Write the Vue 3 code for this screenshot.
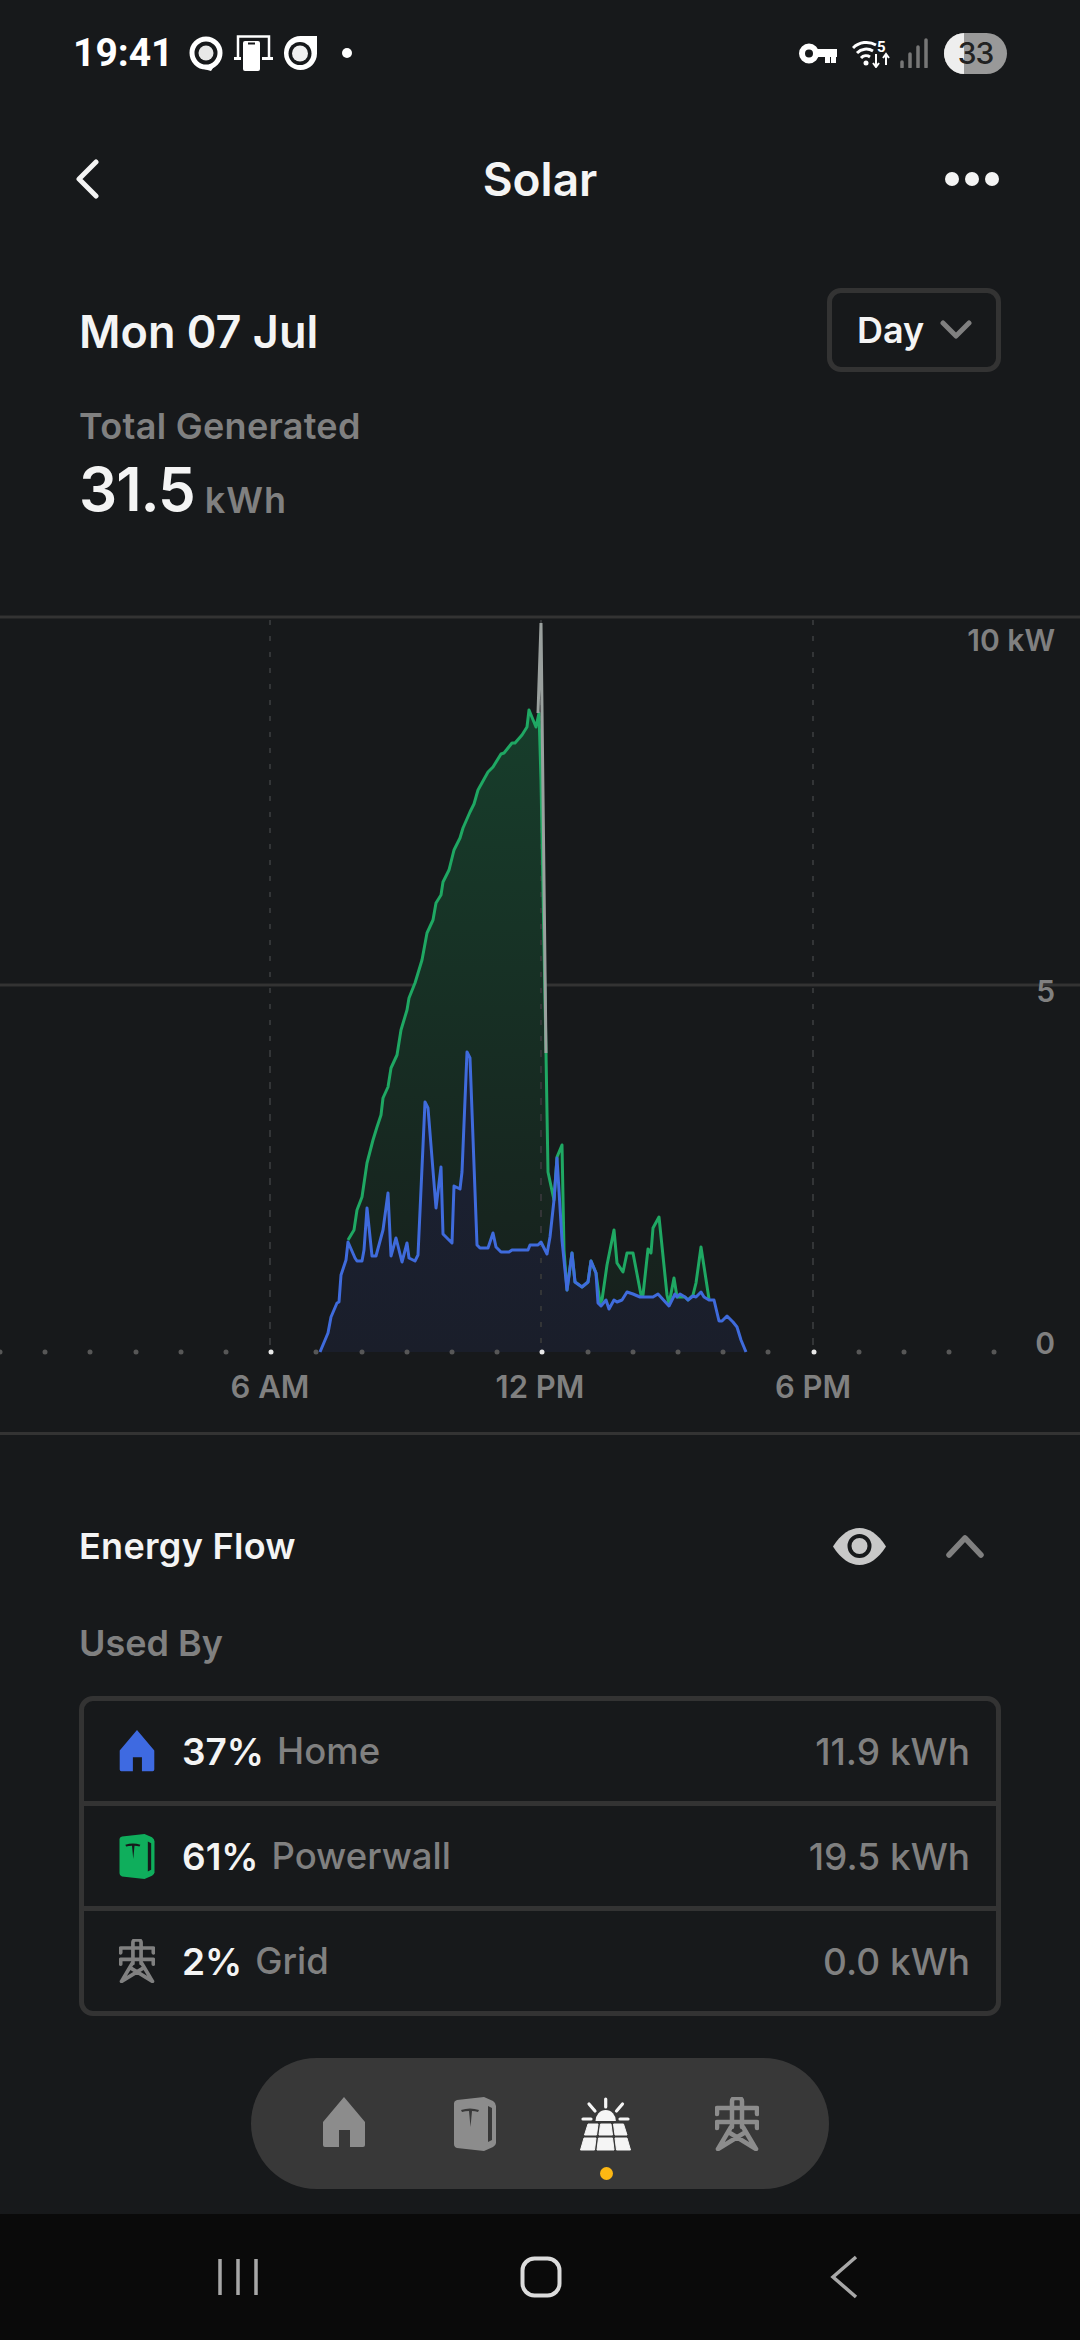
<template>
  <div class="screen">
    <!-- Status bar -->
    <div class="status">
      <span class="clock">19:41</span>
      <svg class="st-icon" width="34" height="35" viewBox="0 0 34 35">
        <circle cx="17" cy="17" r="14" fill="none" stroke="#fff" stroke-width="5" />
        <circle cx="17" cy="17" r="7.5" fill="#e8e8e8" />
        <path d="M30 23 L22 35 L15 33 L24 27 Z" fill="#fff" />
      </svg>
      <svg class="st-icon st-phone" width="40" height="36" viewBox="0 0 40 36">
        <path d="M4 22V1.5h31V22" fill="none" stroke="#fff" stroke-width="2.5" />
        <path d="M0 23.5h8M27 23.5h12" stroke="#fff" stroke-width="3" />
        <rect x="7" y="4" width="21" height="32" fill="#17191b" />
        <rect x="9" y="6" width="17" height="30" rx="2" fill="#fff" />
        <rect x="14" y="7.5" width="7" height="2" fill="#17191b" />
      </svg>
      <svg class="st-icon" width="33" height="34" viewBox="0 0 33 34">
        <path d="M16.5 0H33v17.5a16.5 16.5 0 1 1-33 0V16.5A16.5 16.5 0 0 1 16.5 0z" fill="#fff" />
        <circle cx="16" cy="17.5" r="11.5" fill="#17191b" />
        <circle cx="16" cy="17.5" r="8" fill="#f0f0f0" />
      </svg>
      <span class="st-dot"></span>
      <span class="spacer"></span>
      <svg class="st-key" width="38" height="21" viewBox="0 0 38 21">
        <circle cx="10" cy="10.5" r="7" fill="none" stroke="#fff" stroke-width="6" />
        <path d="M18 6h20v8h-1v6h-5v-6h-1v6h-5v-6h-8z" fill="#fff" />
      </svg>
      <svg class="st-wifi" width="38" height="30" viewBox="0 0 38 30">
        <path d="M1 10a19 19 0 0 1 23-3M5 15a13 13 0 0 1 16-2M9 20a7 7 0 0 1 9-1" fill="none" stroke="#fff" stroke-width="3" />
        <circle cx="14" cy="25" r="2.5" fill="#fff" />
        <text x="25" y="14" class="wifi-five">5</text>
        <path d="M24 16v13M21 25l3 4 3-4M34 27V16M31 20l3-4 3 4" fill="none" stroke="#fff" stroke-width="2" />
      </svg>
      <svg class="st-signal" width="30" height="30" viewBox="0 0 30 30">
        <path d="M3 24v5M11 16v13M19 9v20M27 2v27" stroke="#777" stroke-width="3.5" stroke-linecap="round" fill="none" />
      </svg>
      <div class="battery"><span class="battery-level"></span><span class="battery-text">33</span></div>
    </div>

    <!-- Title bar -->
    <div class="titlebar">
      <svg width="26" height="40" viewBox="0 0 26 40">
        <path d="M22 3 L5 20 L22 37" fill="none" stroke="#f4f4f4" stroke-width="5" stroke-linecap="round" stroke-linejoin="round" />
      </svg>
      <h1 class="title">Solar</h1>
      <div class="more"><span></span><span></span><span></span></div>
    </div>

    <!-- Date and total -->
    <div class="daterow">
      <span class="date">Mon 07 Jul</span>
      <div class="select">
        <span>Day</span>
        <svg width="32" height="20" viewBox="0 0 32 20">
          <path d="M3 3 L16 16 L29 3" fill="none" stroke="#808080" stroke-width="5" stroke-linecap="round" stroke-linejoin="round" />
        </svg>
      </div>
    </div>
    <div class="muted total-label">Total Generated</div>
    <div class="total"><span class="total-num">31.5</span><span class="muted total-unit">kWh</span></div>

    <!-- Chart -->
    <svg class="chart" width="1080" height="832" viewBox="0 600 1080 832">
      <defs>
        <linearGradient id="greenFill" gradientUnits="userSpaceOnUse" x1="0" y1="720" x2="0" y2="1300">
          <stop offset="0" stop-color="#173d2b" />
          <stop offset="1" stop-color="#17211d" />
        </linearGradient>
        <linearGradient id="blueFill" gradientUnits="userSpaceOnUse" x1="0" y1="1050" x2="0" y2="1352">
          <stop offset="0" stop-color="#1b2236" />
          <stop offset="1" stop-color="#1a1e2a" />
        </linearGradient>
      </defs>
      <line x1="0" x2="1080" y1="617" y2="617" class="grid-line" />
      <line x1="0" x2="1080" y1="985" y2="985" class="grid-line" />
      <polygon :points="greenArea" fill="url(#greenFill)" />
      <line v-for="x in [270, 541, 813]" :key="x" :x1="x" :x2="x" y1="620" y2="1350" class="dash" />
      <polygon :points="blueArea" fill="url(#blueFill)" />
      <line v-for="x in [270, 541, 813]" :key="'b' + x" :x1="x" :x2="x" y1="1050" y2="1350" class="dash" />
      <polyline :points="greenLine" fill="none" stroke="#1fa863" stroke-width="3" stroke-linejoin="round" />
      <polyline :points="spike" fill="none" stroke="#9aa09e" stroke-width="3" />
      <polyline :points="blueLine" fill="none" stroke="#3f6bdc" stroke-width="3" stroke-linejoin="round" />
      <circle v-for="d in dots" :key="d.x" :cx="d.x" cy="1352" r="2.5" :fill="d.major ? '#e8e8e8' : '#575757'" />
      <text x="1055" y="651" text-anchor="end" class="axis-y">10 kW</text>
      <text x="1055" y="1002" text-anchor="end" class="axis-y">5</text>
      <text x="1055" y="1354" text-anchor="end" class="axis-y">0</text>
      <text x="270" y="1398" text-anchor="middle" class="axis-x">6 AM</text>
      <text x="540" y="1398" text-anchor="middle" class="axis-x">12 PM</text>
      <text x="813" y="1398" text-anchor="middle" class="axis-x">6 PM</text>
    </svg>
    <div class="divider"></div>

    <!-- Energy flow -->
    <div class="flow-head">
      <span class="flow-title">Energy Flow</span>
      <svg width="53" height="37" viewBox="0 0 53 37">
        <path d="M0 18.5C8 6 17 0 26.5 0S45 6 53 18.5C45 31 36 37 26.5 37S8 31 0 18.5z" fill="#c8c8c8" />
        <circle cx="26.5" cy="18" r="10" fill="#c8c8c8" stroke="#17191b" stroke-width="4" />
      </svg>
      <svg class="flow-chevron" width="38" height="24" viewBox="0 0 38 24">
        <path d="M3 21 L19 4 L35 21" fill="none" stroke="#808080" stroke-width="5.5" stroke-linecap="round" stroke-linejoin="round" />
      </svg>
    </div>
    <div class="muted used-by">Used By</div>

    <div class="table">
      <div class="row" v-for="row in rows" :key="row.name">
        <svg v-if="row.name === 'Home'" class="row-icon" width="36" height="42" viewBox="0 0 42 51">
          <path fill-rule="evenodd" :d="homePath" fill="#3e6ae1" />
        </svg>
        <svg v-else-if="row.name === 'Powerwall'" class="row-icon" width="36" height="45" viewBox="0 0 42 54">
          <path :d="wallPath" fill="#0fae5c" />
          <path d="M34 9l4 2v32l-4 2z" fill="#17191b" />
          <path :d="teslaPath" fill="#17191b" />
        </svg>
        <svg v-else class="row-icon" width="36" height="44" viewBox="0 0 44 54">
          <path :d="towerPath" fill="none" stroke="#808080" stroke-width="4.5" stroke-linejoin="round" stroke-linecap="round" />
        </svg>
        <span class="pct">{{ row.pct }}</span>
        <span class="muted row-name">{{ row.name }}</span>
        <span class="spacer"></span>
        <span class="muted row-val">{{ row.val }}</span>
      </div>
    </div>

    <!-- Floating tab bar -->
    <div class="pill">
      <div class="tab">
        <svg width="42" height="51" viewBox="0 0 42 51"><path fill-rule="evenodd" :d="homePath" fill="#8c8c8c" /></svg>
      </div>
      <div class="tab">
        <svg width="42" height="54" viewBox="0 0 42 54">
          <path :d="wallPath" fill="#8c8c8c" />
          <path d="M34 9l4 2v32l-4 2z" fill="#383838" />
          <path :d="teslaPath" fill="#383838" />
        </svg>
      </div>
      <div class="tab">
        <svg width="52" height="54" viewBox="0 0 52 54">
          <path d="M15.5 24a10.2 11 0 0 1 20.4 0z" fill="#f5f5f5" />
          <path d="M25.7 2v8M9 7l6 7M42.5 7l-6 7M3 22h8M40 22h8" stroke="#f5f5f5" stroke-width="3.2" stroke-linecap="round" fill="none" />
          <polygon v-for="(p, i) in panels" :key="i" :points="p" fill="#f5f5f5" stroke="#f5f5f5" stroke-width="1" stroke-linejoin="round" />
        </svg>
        <span class="tab-dot"></span>
      </div>
      <div class="tab">
        <svg width="44" height="54" viewBox="0 0 44 54"><path :d="towerPath" fill="none" stroke="#8c8c8c" stroke-width="4.5" stroke-linejoin="round" stroke-linecap="round" /></svg>
      </div>
    </div>

    <!-- Android nav -->
    <div class="navbar">
      <svg width="42" height="36" viewBox="0 0 42 36"><path d="M3 0v36M21 0v36M39 0v36" stroke="#a8a8a8" stroke-width="3.5" /></svg>
      <svg width="42" height="42" viewBox="0 0 42 42"><rect x="2.5" y="2.5" width="37" height="37" rx="12" fill="none" stroke="#dcdcdc" stroke-width="4" /></svg>
      <svg width="42" height="44" viewBox="0 0 42 44"><path d="M33 2 L10 22 L33 42" fill="none" stroke="#a8a8a8" stroke-width="3.5" /></svg>
    </div>
  </div>
</template>

<script setup>
const rows = [
  { pct: '37%', name: 'Home', val: '11.9 kWh' },
  { pct: '61%', name: 'Powerwall', val: '19.5 kWh' },
  { pct: '2%', name: 'Grid', val: '0.0 kWh' }
];

// icons shared between table and tab bar
const homePath = 'M21 0 L42 25 V48 a2 2 0 0 1-2 2 H27 V33 H16 V50 H2 a2 2 0 0 1-2-2 V25 Z';
const wallPath = 'M3 3 L30 0 L39 4 Q42 6 42 9 V46 Q42 48 39 50 L30 54 L3 51 Q0 50 0 47 V6 Q0 4 3 3 Z';
const teslaPath = 'M7 13 Q16 10 25 13 L24 15 Q21 14 18 14 L16.5 30 L15 14 Q11 14 8 15 Z';
const towerPath = 'M17 30V4a3 3 0 0 1 3-3h4a3 3 0 0 1 3 3v26M2 17v-6h40v6M2 31v-6h40v6M16 30L3 52M28 30L41 52M3 52L29 36M41 52L15 36';
const panels = [
  '8,27 18,27 16.5,38 4.5,38', '20.5,27 31,27 32.5,38 19,38', '33.5,27 43.5,27 47,38 35,38',
  '4,41 16,41 14.5,53 0.5,53', '18.5,41 32.5,41 34,53 17,53', '35,41 47,41 50.5,53 36.5,53'
];

// chart traces, in page pixels read off the reference
const blue = [
  [320,1352],[328,1333],[331,1317],[337,1303],[339,1302],[341,1275],[346,1260],[348,1242],[355,1258],[357,1261],[362,1261],[364,1250],[367,1208],[372,1256],[376,1256],[383,1230],[388,1193],[391,1256],[396,1238],[402,1262],[407,1243],[409,1258],[415,1261],[418,1255],[425,1102],[428,1108],[436,1208],[441,1167],[443,1234],[452,1243],[454,1186],[460,1189],[462,1172],[467,1052],[470,1058],[477,1245],[480,1248],[488,1248],[493,1233],[496,1247],[501,1252],[509,1252],[512,1250],[528,1250],[530,1245],[538,1245],[541,1242],[547,1254],[550,1237],[554,1200],[557,1158],[562,1240],[567,1290],[572,1253],[575,1282],[582,1287],[588,1282],[591,1261],[596,1273],[598,1303],[601,1306],[606,1300],[609,1309],[614,1300],[617,1302],[622,1300],[627,1292],[633,1294],[640,1297],[653,1297],[658,1294],[669,1306],[675,1294],[677,1297],[680,1294],[685,1297],[688,1300],[693,1296],[696,1297],[701,1292],[704,1297],[709,1300],[714,1300],[719,1321],[722,1321],[727,1316],[733,1322],[737,1327],[741,1340],[746,1352]
];
const greenLeft = [
  [348,1240],[354,1230],[357,1210],[362,1197],[367,1163],[373,1140],[377,1127],[381,1115],[383,1098],[388,1087],[391,1068],[397,1055],[401,1030],[407,1010],[409,998],[415,983],[422,960],[427,933],[433,920],[436,903],[441,895],[443,882],[449,870],[454,850],[460,838],[463,828],[470,812],[474,804],[478,790],[488,772],[493,767],[501,754],[504,753],[512,743],[515,743],[522,735],[527,727],[529,710],[536,727],[539,713],[541,780],[546,1053],[548,1172],[554,1200],[557,1157],[562,1145],[564,1250]
];
const greenRight = [
  [596,1273],[600,1303],[602,1300],[607,1265],[614,1230],[617,1263],[623,1272],[627,1253],[633,1253],[641,1295],[643,1295],[648,1249],[651,1253],[653,1228],[659,1217],[667,1295],[669,1304],[674,1278],[677,1297]
];
const greenEnd = [[693,1295],[696,1283],[701,1247],[709,1299]];

const toPts = (list) => list.map((p) => p.join(',')).join(' ');

const greenAll = [...greenLeft, [567,1290],[572,1253],[575,1282],[582,1287],[588,1282],[591,1261], ...greenRight, [685,1297],[688,1300], ...greenEnd];
const greenArea = toPts([[348,1352], ...greenAll, [709,1352]]);
const blueArea = toPts(blue);
// hidden stretches of the green trace run under the blue one
const greenLine = toPts(greenAll);
const blueLine = toPts(blue);
const spike = toPts([[538,713],[541,623],[546,1053]]);

const dots = [];
for (let i = 0; i < 23; i++) {
  const x = Math.round(i * 45.2);
  dots.push({ x, major: i === 6 || i === 12 || i === 18 });
}
</script>

<style>
html, body {
  background: #17191b;
}
</style>

<style scoped>
.screen {
  width: 1080px;
  height: 2340px;
  background: #17191b;
  color: #f4f4f4;
  font-family: Inter, "Noto Sans", sans-serif;
  display: flex;
  flex-direction: column;
  overflow: hidden;
}

.muted {
  color: #808080;
}

.spacer {
  flex: 1;
}

.status {
  height: 106px;
  padding: 0 73px;
  box-sizing: border-box;
  display: flex;
  align-items: center;
}

.clock {
  font-family: Roboto, sans-serif;
  font-size: 39px;
  font-weight: 700;
  color: #fff;
  width: 116px;
}

.st-icon {
  margin-right: 11px;
}

.st-phone {
  margin-right: 10px;
}

.st-dot {
  width: 10px;
  height: 10px;
  border-radius: 50%;
  background: #fff;
  margin-left: 14px;
}

.st-key {
  margin-right: 15px;
}

.st-wifi {
  margin-right: 9px;
}

.wifi-five {
  font-family: Roboto, sans-serif;
  font-size: 15px;
  font-weight: 700;
  fill: #fff;
}

.st-signal {
  margin-right: 15px;
}

.battery {
  position: relative;
  width: 63px;
  height: 41px;
  border-radius: 21px;
  background: #999;
  overflow: hidden;
  display: flex;
  align-items: center;
  justify-content: center;
}

.battery-level {
  position: absolute;
  left: 0;
  top: 0;
  bottom: 0;
  width: 20px;
  background: #eee;
}

.battery-text {
  position: relative;
  font-size: 30px;
  font-weight: 500;
  letter-spacing: -1px;
  color: #222;
}

.titlebar {
  height: 146px;
  padding: 0 81px 0 74px;
  box-sizing: border-box;
  display: flex;
  align-items: center;
  justify-content: space-between;
  position: relative;
}

.title {
  position: absolute;
  left: 0;
  right: 0;
  text-align: center;
  margin: 0;
  font-size: 46px;
  font-weight: 600;
}

.more {
  display: flex;
  gap: 6px;
}

.more span {
  width: 14px;
  height: 14px;
  border-radius: 50%;
  background: #f4f4f4;
}

.daterow {
  margin-top: 36px;
  padding: 0 79px;
  display: flex;
  align-items: center;
  justify-content: space-between;
}

.date {
  padding-top: 2px;
  font-size: 45px;
  font-weight: 600;
}

.select {
  width: 174px;
  height: 84px;
  box-sizing: border-box;
  border: 5px solid #333;
  border-radius: 14px;
  padding: 0 24px 0 25px;
  display: flex;
  align-items: center;
  justify-content: space-between;
  font-size: 36px;
  font-weight: 600;
}

.total-label {
  margin: 32px 0 0 79px;
  font-size: 36px;
  font-weight: 600;
  letter-spacing: 0.3px;
  line-height: 44px;
}

.total {
  margin: 4px 0 0 79px;
  height: 74px;
  line-height: 74px;
}

.total-num {
  font-size: 60px;
  font-weight: 600;
  letter-spacing: -1px;
}

.total-unit {
  margin-left: 10px;
  font-size: 36px;
  font-weight: 600;
  letter-spacing: 1px;
  vertical-align: -2px;
}

.chart {
  display: block;
  margin-top: 74px;
}

.grid-line {
  stroke: #333;
  stroke-width: 3;
}

.dash {
  stroke: #333537;
  stroke-width: 2;
  stroke-dasharray: 5 11;
}

.axis-y {
  font-size: 30px;
  font-weight: 600;
  fill: #808080;
}

.axis-x {
  font-size: 31px;
  font-weight: 600;
  fill: #808080;
}

.divider {
  height: 3px;
  background: #333;
}

.flow-head {
  margin-top: 91px;
  padding: 0 96px 0 79px;
  height: 40px;
  display: flex;
  align-items: center;
}

.flow-title {
  flex: 1;
  font-size: 36px;
  font-weight: 600;
  letter-spacing: 0.3px;
}

.flow-chevron {
  margin-left: 60px;
}

.used-by {
  margin: 52px 0 0 79px;
  font-size: 36px;
  font-weight: 600;
  line-height: 50px;
}

.table {
  margin: 28px 79px 0;
  border: 5px solid #333;
  border-radius: 14px;
}

.row {
  height: 100px;
  padding: 0 26px 0 35px;
  display: flex;
  align-items: center;
  font-size: 37px;
  font-weight: 500;
}

.row + .row {
  border-top: 5px solid #333;
}

.row-icon {
  margin-right: 27px;
}

.pct {
  font-weight: 600;
}

.row-name {
  margin-left: 13px;
  font-size: 36.5px;
}

.pill {
  margin: 42px 0 0 251px;
  width: 578px;
  height: 131px;
  border-radius: 66px;
  background: #383838;
  padding-top: 39px;
  box-sizing: border-box;
  display: grid;
  grid-template-columns: repeat(4, 131px);
  justify-content: center;
  position: relative;
}

.tab {
  display: flex;
  justify-content: center;
  align-items: flex-start;
  position: relative;
}

.tab-dot {
  position: absolute;
  top: 70px;
  left: 50%;
  width: 13px;
  height: 13px;
  margin-left: -6px;
  border-radius: 50%;
  background: #fdb813;
}

.navbar {
  margin-top: 25px;
  flex: 1;
  background: #0a0a0a;
  display: flex;
  align-items: center;
  justify-content: space-between;
  padding: 0 215px 0 217px;
}
</style>
